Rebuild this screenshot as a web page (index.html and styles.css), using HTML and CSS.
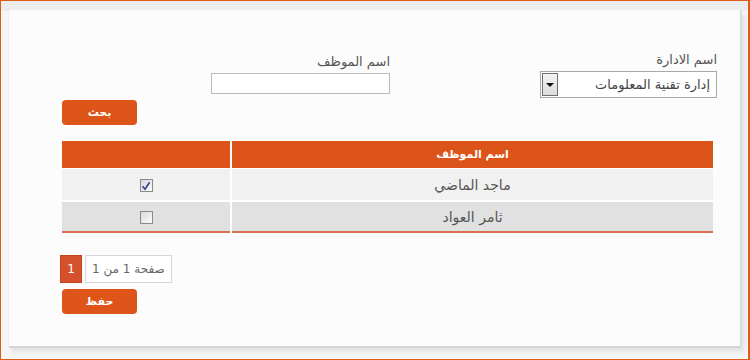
FILE: index.html
```html
<!DOCTYPE html>
<html lang="ar" dir="rtl">
<head>
  <meta charset="UTF-8">
  <title>بحث الموظفين</title>
  <link rel="stylesheet" href="styles.css">
</head>
<body>
  <div class="frame">
    <div class="panel">

      <!-- معايير البحث -->
      <div class="filters">
        <div class="field field-dept">
          <label>اسم الادارة</label>
          <div class="select">
            <span class="select-text">إدارة تقنية المعلومات</span>
            <span class="select-btn"><span class="arrow"></span></span>
          </div>
        </div>
        <div class="field field-emp">
          <label>اسم الموظف</label>
          <input type="text" class="text-input">
        </div>
      </div>

      <div class="actions">
        <button class="btn">بحث</button>
      </div>

      <!-- جدول النتائج -->
      <table class="grid">
        <thead>
          <tr>
            <th class="col-name">اسم الموظف</th>
            <th class="col-check"></th>
          </tr>
        </thead>
        <tbody>
          <tr class="row-odd">
            <td>ماجد الماضي</td>
            <td class="cell-check">
              <span class="check">
                <svg width="10" height="10" viewBox="0 0 10 10"><path d="M1.5 5.2 L4 8.2 L8.6 1.2" fill="none" stroke="#2b3f8f" stroke-width="1.6"/></svg>
              </span>
            </td>
          </tr>
          <tr class="row-even">
            <td>ثامر العواد</td>
            <td class="cell-check"><span class="check"></span></td>
          </tr>
        </tbody>
      </table>

      <!-- الترقيم -->
      <div class="pager">
        <span class="page-info">صفحة 1 من 1</span>
        <span class="page-num">1</span>
      </div>

      <div class="actions save">
        <button class="btn">حفظ</button>
      </div>

    </div>
  </div>
</body>
</html>
```

FILE: styles.css
```css
/* Styles généraux */
html, body {
  margin: 0;
  height: 100%;
}
body {
  font-family: "DejaVu Sans", Tahoma, sans-serif;
  font-size: 13px;
  color: #555;
}
.frame {
  box-sizing: border-box;
  height: 360px;
  border: 1px solid #e05a1a;
  border-right-width: 2px;
  background: linear-gradient(#ececec 0, #ececec 10px, #f6f6f6 10px);
  padding: 9px 6px 12px 7px;
}
.panel {
  box-sizing: border-box;
  height: 338px;
  background-color: #fcfcfc;
  border-radius: 3px;
  border-left: 1px solid #f0f0f0;
  border-right: 2px solid #dcdcdc;
  border-bottom: 2px solid #d4d4d4;
  box-shadow: 3px 4px 5px rgba(0, 0, 0, 0.08);
  padding: 42px 23px 0 54px;
}

/* Filtres */
.filters {
  display: flex;
  gap: 150px;
}
.field label {
  display: block;
  line-height: 16px;
  margin-bottom: 3px;
}
.field-dept {
  width: 177px;
}
.field-emp {
  width: 179px;
  padding-top: 2px;
}
.select {
  display: flex;
  align-items: stretch;
  height: 25px;
  border: 1px solid #a9a9a9;
  background-color: #fff;
}
.select-text {
  flex: 1;
  line-height: 25px;
  padding-right: 6px;
  color: #444;
}
.select-btn {
  width: 14px;
  margin: 1px;
  border: 1px solid #707070;
  background: linear-gradient(#f4f4f4, #dcdcdc);
  display: flex;
  align-items: center;
  justify-content: center;
}
.arrow {
  width: 0;
  height: 0;
  border-left: 4px solid transparent;
  border-right: 4px solid transparent;
  border-top: 4px solid #111;
}
.text-input {
  box-sizing: border-box;
  display: block;
  width: 179px;
  height: 21px;
  border: 1px solid #bbb;
  background-color: #fff;
  margin: 0;
}

/* Boutons */
.actions {
  display: flex;
  justify-content: flex-end;
  margin-top: 2px;
  margin-left: -1px;
}
.btn {
  width: 75px;
  height: 25px;
  border: none;
  border-radius: 4px;
  background-color: #dd5518;
  color: #fff;
  font-family: "DejaVu Sans", sans-serif;
  font-size: 11px;
  font-weight: bold;
  cursor: pointer;
  padding: 0;
}
.actions.save {
  margin-top: 6px;
}

/* Tableau */
.grid {
  width: 651px;
  margin-top: 16px;
  margin-right: 4px;
  border-collapse: collapse;
  border-bottom: 2px solid #d8714a;
}
.grid th {
  background-color: #dc5419;
  color: #fff;
  font-size: 11px;
  font-weight: bold;
  height: 27px;
  padding: 0;
}
.grid td {
  text-align: center;
  padding: 0;
  height: 31px;
  color: #555;
  font-size: 14px;
}
.grid th + th,
.grid td + td {
  border-right: 2px solid #fff;
}
.grid tr.row-odd td {
  background-color: #f1f1f1;
  border-top: 1px solid #fff;
}
.grid tr.row-even td {
  background-color: #e1e1e1;
  border-top: 2px solid #fff;
  height: 29px;
}
.col-check {
  width: 168px;
}
.check {
  display: inline-flex;
  align-items: center;
  justify-content: center;
  box-sizing: border-box;
  width: 13px;
  height: 13px;
  border: 1px solid #8a8a8a;
  background: linear-gradient(135deg, #d8d8d8, #fbfbfb);
  vertical-align: middle;
}

/* Pagination */
.pager {
  display: flex;
  justify-content: flex-end;
  gap: 3px;
  margin-top: 22px;
  margin-left: -3px;
}
.page-num {
  box-sizing: border-box;
  width: 22px;
  height: 28px;
  line-height: 26px;
  text-align: center;
  background-color: #d5502c;
  border: 1px solid #c0451f;
  color: #fff;
  font-size: 12px;
}
.page-info {
  box-sizing: border-box;
  height: 28px;
  line-height: 26px;
  padding: 0 6px;
  background-color: #fff;
  border: 1px solid #d6d6d6;
  color: #666;
  font-size: 12px;
}
```
